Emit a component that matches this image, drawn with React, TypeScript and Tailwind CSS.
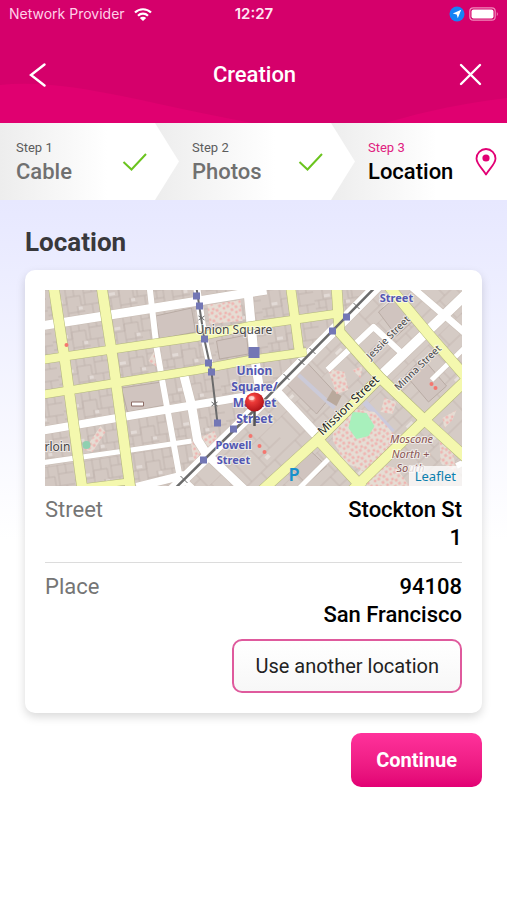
import React from "react";

type Point = [number, number];

interface StepProps {
  label: string;
  title: string;
  state: "done" | "current";
  className?: string;
}

const stations: Point[] = [
  [152, 6],
  [155, 16],
  [160, 49],
  [164, 73],
  [167, 82],
  [173, 133],
  [189, 139],
  [159, 170],
  [302, 27],
  [288, 41],
];

// quiet streets, drawn white
const streets = [
  { d: "M-4 36 L148 12 L215 1 L222 0", w: 9 },
  { d: "M-4 141 L90 125 L180 110 L214 104", w: 8 },
  { d: "M-4 173 L80 161 L147 151", w: 5 },
  { d: "M92 197 L140 185", w: 8 },
  { d: "M105 -4 L112 57 L118 92 L135 186 L150 200", w: 6 },
  { d: "M139 84 L147 115 L153 150 L162 164 L200 200", w: 9 },
  { d: "M152 -4 L160 50 L167 82", w: 7 },
  { d: "M203 -4 L209 60 L217 112", w: 9 },
  { d: "M128 200 L210 120 L333 -4", w: 11 },
  { d: "M231 101 L273 146", w: 10 },
  { d: "M283 80 L329 37 L356 62", w: 6 },
  { d: "M337 85 L402 23 L424 2", w: 10 },
  { d: "M366 -4 L424 46", w: 7 },
  { d: "M387 90 L424 54", w: 5 },
  { d: "M253 200 L285 168", w: 5 },
  { d: "M412 176 L424 170", w: 6 },
];

// main roads, drawn yellow with a darker casing
const mainRoads = [
  { d: "M9 -4 L21 75 L38 200", w: 10 },
  { d: "M57 -4 L69 74 L86 200", w: 10 },
  { d: "M-4 70 L152 47 L205 36 L290 24", w: 8 },
  { d: "M-4 105 L152 80 L205 70 L262 62", w: 8 },
  { d: "M246 -4 L255 64", w: 9 },
  { d: "M292 -4 L295 42 L335 87 L380 130 L424 170", w: 10 },
  { d: "M218 200 L273 150 L335 88", w: 10 },
  { d: "M271 147 L318 198", w: 10 },
  { d: "M344 -4 L384 44 L424 90", w: 10 },
  { d: "M308 200 L380 130 L424 88", w: 10 },
  { d: "M40 197 L88 191", w: 6 },
];

const treeClumps = [
  "M163 15 L196 10 L198 31 L165 34Z",
  "M290 128 L305 118 L330 122 L350 145 L343 165 L320 182 L300 172 L288 150Z",
  "M283 78 L300 82 L304 100 L292 104Z",
  "M308 80 L318 76 L316 88Z",
  "M340 108 L352 112 L348 124 L336 122Z",
  "M325 172 L352 178 L365 196 L322 196Z",
  "M395 150 L408 160 L412 182 L396 172Z",
  "M398 128 L412 120 L408 130 L400 138Z",
  "M146 152 L170 141 L173 149 L150 174Z",
  "M40 160 L56 136 L61 142 L48 162Z",
  "M104 71 L112 57 L114 78Z",
];

const redDots: Point[] = [
  [206, 146],
  [215, 156],
  [220, 162],
  [22, 55],
  [387, 94],
  [391, 98],
];

const MapPicture: React.FC = () => (
  <svg
    viewBox="0 0 418 196"
    preserveAspectRatio="xMidYMid slice"
    className="block h-[196px] w-full"
    role="img"
    aria-label="Map around Union Square"
  >
    <defs>
      <pattern
        id="blocks"
        width="53"
        height="35"
        patternUnits="userSpaceOnUse"
        patternTransform="rotate(-9)"
      >
        <rect width="53" height="35" fill="#d3c8c2" />
        <path
          d="M0 0H53M0 18H20V11H34V21H53M9 0V18M20 0V35M28 0V11M38 0V21M45 21V35M0 26H11V35M11 18V26M20 27H37M30 21V35M38 9H53M46 0V9M4 18V26"
          fill="none"
          stroke="#bbaea7"
          strokeWidth="0.7"
        />
        <path d="M10 13h6v3h-6zM31 22h4v3h-4z" fill="#e2dad6" />
      </pattern>
      <pattern
        id="lots"
        width="67"
        height="51"
        patternUnits="userSpaceOnUse"
        patternTransform="rotate(-44)"
      >
        <rect width="67" height="51" fill="#d5cbc5" />
        <path
          d="M0 0H67M0 27H67M16 0V27M37 0V27M52 0V15M37 15H67M9 27V51M29 27V40H48M48 27V51M9 40H29"
          fill="none"
          stroke="#bfb2ab"
          strokeWidth="0.7"
        />
        <path d="M31 43h8v3h-8zM42 18h5v4h-5z" fill="#e6dfda" />
      </pattern>
      <pattern
        id="trees"
        width="13"
        height="11"
        patternUnits="userSpaceOnUse"
        patternTransform="rotate(17)"
      >
        <rect width="13" height="11" fill="#e6ddd4" />
        <g fill="#f6dcd6" stroke="#ee9a9a" strokeWidth="0.8">
          <circle cx="2" cy="2" r="1.1" />
          <circle cx="6" cy="4" r="1.1" />
          <circle cx="11" cy="2" r="1" />
          <circle cx="3" cy="8" r="1.1" />
          <circle cx="8" cy="9" r="1" />
          <circle cx="11" cy="6" r="1.1" />
        </g>
      </pattern>
      <radialGradient id="ball" cx="0.38" cy="0.32" r="0.7">
        <stop offset="0" stopColor="#ffb3a6" />
        <stop offset="0.3" stopColor="#ec3a38" />
        <stop offset="1" stopColor="#b01218" />
      </radialGradient>
    </defs>

    <rect width="418" height="196" fill="url(#blocks)" />
    <path d="M328 0 L418 0 V196 H133 L210 120Z" fill="url(#lots)" />

    <g fill="#d0c4bf" stroke="#b3a59d" strokeWidth="0.8">
      <path d="M111 26 L147 18 L151 42 L115 49Z" />
      <path d="M77 98 L117 92 L121 115 L83 122Z" />
      <path d="M172 51 L202 45 L204 64 L175 69Z" />
      <path d="M334 22 L350 8 L374 26 L352 46Z" />
      <path d="M361 85 L378 68 L402 96 L384 112Z" />
      <path d="M265 160 L246 178 L262 194 L282 176Z" />
      <path d="M240 92 L262 72 L290 102 L272 124Z" />
    </g>
    <path d="M87 112h12v4h-12z" fill="#fff" stroke="#8d6d66" />
    <path d="M254 85 L290 118" stroke="#cbcad8" strokeWidth="4" />
    <path d="M320 112 L348 142" stroke="#cbcadc" strokeWidth="6" />
    <path d="M288 100 L297 106 L292 116 L282 110Z" fill="#b9a99c" />
    {treeClumps.map((d) => (
      <path key={d} d={d} fill="url(#trees)" />
    ))}
    <path
      d="M308 122 L322 123 L330 136 L324 146 L312 149 L304 138Z"
      fill="#a8f0bc"
    />
    <circle cx="42" cy="155" r="4" fill="#90d0b0" />

    <g fill="none" strokeLinejoin="round">
      {streets.map(({ d, w }) => (
        <path key={d} d={d} stroke="#c9bdb4" strokeWidth={w + 1} />
      ))}
      {streets.map(({ d, w }) => (
        <path key={d} d={d} stroke="#ffffff" strokeWidth={w} />
      ))}
      {mainRoads.map(({ d, w }) => (
        <path key={d} d={d} stroke="#b3b77c" strokeWidth={w + 1} />
      ))}
      {mainRoads.map(({ d, w }) => (
        <path key={d} d={d} stroke="#f4f8ae" strokeWidth={w} />
      ))}
    </g>
    {redDots.map(([x, y]) => (
      <circle key={`${x}-${y}`} cx={x} cy={y} r="2" fill="#f4766f" />
    ))}

    {/* rail lines */}
    <g fill="none" stroke="#6b6b6b" strokeWidth="2">
      <path d="M152 -2 L160 50 L167 82 L173 133" />
      <path d="M131 198 L210 120 L330 -2" strokeWidth="2.5" />
      <path
        d="M154 26l6 4m0-4l-6 4M167 112l6 4m0-4l-6 4M136 186l7 7M239 84l6 6M254 69l6 6M265 58l6 6M309 13l6 6"
        strokeWidth="1"
      />
    </g>
    {stations.map(([x, y]) => (
      <rect
        key={`${x}-${y}`}
        x={x - 3.5}
        y={y - 3.5}
        width="7"
        height="7"
        fill="#7377b5"
      />
    ))}
    <rect x="204" y="57" width="11" height="11" fill="#7377b5" />

    <g
      fontFamily="'Noto Sans', sans-serif"
      fontSize="12"
      stroke="#ffffff"
      strokeOpacity="0.6"
      strokeWidth="2"
      paintOrder="stroke"
    >
      <g fill="#464646">
        <text x="151" y="44">Union Square</text>
        <text x="0" y="161">rloin</text>
        <text transform="translate(278 146) rotate(-44)" fill="#222">
          Mission Street
        </text>
        <text transform="translate(326 70) rotate(-45)" fontSize="10">
          Jessie Street
        </text>
        <text transform="translate(354 101) rotate(-44)" fontSize="10">
          Minna Street
        </text>
      </g>
      <g fill="#5257b3" fontWeight="700" textAnchor="middle">
        <text x="210" y="85">Union</text>
        <text x="210" y="101">Square/</text>
        <text x="210" y="117">Market</text>
        <text x="210" y="133">Street</text>
        <g fontSize="11">
          <text x="189" y="159">Powell</text>
          <text x="189" y="174">Street</text>
          <text x="352" y="12">Street</text>
        </g>
      </g>
      <g fill="#8a5552" fontStyle="italic" fontSize="11" textAnchor="middle">
        <text x="367" y="153">Moscone</text>
        <text x="366" y="168">North +</text>
        <text x="366" y="182">South</text>
      </g>
      <text
        x="244"
        y="191"
        fill="#1690cc"
        fontSize="18"
        fontWeight="600"
        stroke="none"
      >
        P
      </text>
    </g>

    <path d="M210 120V136" stroke="#555" strokeWidth="2.5" />
    <circle cx="210" cy="112" r="9.5" fill="url(#ball)" />
    <ellipse cx="207" cy="108" rx="3" ry="2" fill="#fff" opacity="0.6" />
  </svg>
);

const CheckMark: React.FC = () => (
  <svg viewBox="0 0 26 20" className="h-5 w-[26px] shrink-0" fill="none">
    <path d="M1.5 10 L9.5 17.5 L24 2" stroke="#6bc41f" strokeWidth="2" />
  </svg>
);

const PinMark: React.FC = () => (
  <svg viewBox="0 0 22 28" className="h-7 w-[22px] shrink-0" fill="none">
    <path
      d="M11 26.5 C7.5 20.5 1.5 16 1.5 10.5 A9.5 9.5 0 0 1 20.5 10.5 C20.5 16 14.5 20.5 11 26.5Z"
      stroke="#e20074"
      strokeWidth="1.8"
      strokeLinejoin="round"
    />
    <circle cx="11" cy="10" r="3.6" fill="#e20074" />
  </svg>
);

const Step: React.FC<StepProps> = ({ label, title, state, className }) => {
  const current = state === "current";
  return (
    <li
      aria-current={current ? "step" : undefined}
      className={`relative flex items-center justify-between bg-linear-to-r from-[#ededed] to-white to-60% ${className}`}
    >
      <div>
        <p
          className={`text-[13px] leading-5 ${
            current ? "text-[#e0207f]" : "text-[#5c5c5c]"
          }`}
        >
          {label}
        </p>
        <p
          className={`text-[22px] leading-7 font-medium ${
            current ? "text-black" : "text-[#707070]"
          }`}
        >
          {title}
        </p>
      </div>
      {current ? <PinMark /> : <CheckMark />}
    </li>
  );
};

const StatusBar: React.FC = () => (
  <div className="relative grid h-7 grid-cols-3 items-center pr-2 pl-[9px] font-[Inter,sans-serif] text-sm">
    <div className="flex items-center gap-2 whitespace-nowrap text-[#ffd0e8]">
      Network Provider
      <svg viewBox="0 0 20 15" className="h-[15px] w-5 shrink-0" fill="none">
        <path
          d="M2 5.5 A11.5 11.5 0 0 1 18 5.5 M5 8.7 A7.2 7.2 0 0 1 15 8.7"
          stroke="#fff"
          strokeWidth="2.2"
        />
        <path d="M10 14 L6.8 11 A4.5 4.5 0 0 1 13.2 11Z" fill="#fff" />
      </svg>
    </div>
    <div className="text-center text-[15px] font-semibold text-[#ffe6f3]">
      12:27
    </div>
    <div className="flex items-center justify-end gap-1">
      <svg viewBox="0 0 16 16" className="h-4 w-4">
        <circle cx="8" cy="8" r="7.5" fill="#1683f5" />
        <path d="M12.2 3.8 L8.8 12.2 L7.7 8.4 L3.8 7.5Z" fill="#fff" />
      </svg>
      <svg viewBox="0 0 30 14" className="h-3.5 w-[30px]" fill="none">
        <rect
          x="0.8"
          y="0.8"
          width="25.4"
          height="12.4"
          rx="3.5"
          stroke="#f08abb"
          strokeWidth="1.2"
        />
        <rect x="2.5" y="2.5" width="22" height="9" rx="2" fill="#fff" />
        <path d="M27.8 5 a2.5 2.5 0 0 1 0 4Z" fill="#f08abb" />
      </svg>
    </div>
  </div>
);

const Header: React.FC = () => (
  <header className="relative bg-[#d5006b] text-white">
    <svg
      viewBox="0 0 507 123"
      preserveAspectRatio="none"
      className="absolute inset-0 h-full w-full"
      aria-hidden="true"
    >
      <path d="M0 85 C70 78 150 105 252 123 H0Z" fill="#e00070" />
      <path d="M385 123 C430 110 465 103 507 98 V123Z" fill="#e00070" />
    </svg>
    <StatusBar />
    <div className="relative flex h-[95px] items-center justify-between pr-[22px] pb-0.5 pl-6">
      <button type="button" aria-label="Back" className="p-0.5">
        <svg viewBox="0 0 24 24" className="h-6 w-6" fill="none">
          <path
            d="M18.5 1.5 L5 12 L18.5 22.5"
            stroke="#fff"
            strokeWidth="2.4"
            strokeLinecap="round"
          />
        </svg>
      </button>
      <h1 className="text-[22px] leading-7 font-medium">Creation</h1>
      <button type="button" aria-label="Close" className="p-0.5">
        <svg viewBox="0 0 24 24" className="h-6 w-6" fill="none">
          <path
            d="M2 2 L21 21 M21 2 L2 21"
            stroke="#fff"
            strokeWidth="2.4"
            strokeLinecap="round"
          />
        </svg>
      </button>
    </div>
  </header>
);

const App: React.FC = () => {
  return (
    <div className="min-h-screen bg-white font-[Roboto,sans-serif]">
      <Header />

      <ol className="grid h-[77px] grid-cols-[155fr_176fr_176fr] bg-white">
        <Step
          label="Step 1"
          title="Cable"
          state="done"
          className="z-20 -mr-6 pr-[31px] pl-4 [clip-path:polygon(0_0,calc(100%-24px)_0,100%_50%,calc(100%-24px)_100%,0_100%)]"
        />
        <Step
          label="Step 2"
          title="Photos"
          state="done"
          className="z-10 -mr-6 pr-[31px] pl-[37px] [clip-path:polygon(0_0,calc(100%-24px)_0,100%_50%,calc(100%-24px)_100%,0_100%)]"
        />
        <Step
          label="Step 3"
          title="Location"
          state="current"
          className="pr-2.5 pl-[37px]"
        />
      </ol>

      <main className="bg-linear-to-b from-[#e7e8ff] to-white to-[340px] px-[25px] pt-6 pb-8">
        <h2 className="text-[26px] leading-9 font-bold text-[#38383c]">
          Location
        </h2>

        <section className="mt-2.5 rounded-[10px] bg-white p-5 shadow-[0_4px_10px_rgba(0,0,0,0.15)]">
          <div className="relative overflow-hidden">
            <MapPicture />
            <a
              href="#leaflet"
              className="absolute right-0 bottom-0 bg-white/75 px-1.5 font-['Noto_Sans',sans-serif] text-[13px] leading-5 text-[#0b7fae]"
            >
              Leaflet
            </a>
          </div>

          <dl className="text-[22px] leading-7">
            <div className="flex justify-between border-b border-[#dcdcdc] pt-2.5 pb-2.5">
              <dt className="text-[#757575]">Street</dt>
              <dd className="text-right font-medium text-black">
                Stockton St
                <br />1
              </dd>
            </div>
            <div className="flex justify-between pt-2.5">
              <dt className="text-[#757575]">Place</dt>
              <dd className="text-right font-medium text-black">
                94108
                <br />
                San Francisco
              </dd>
            </div>
          </dl>

          <div className="mt-2.5 flex justify-end">
            <button
              type="button"
              className="h-[54px] rounded-[10px] border-2 border-[#df5a9d] bg-linear-to-b from-white to-[#f7f7f7] px-[21px] text-xl text-[#222]"
            >
              Use another location
            </button>
          </div>
        </section>

        <div className="mt-5 flex justify-end">
          <button
            type="button"
            className="h-[54px] rounded-[10px] bg-linear-to-b from-[#ff319b] to-[#e20074] px-[25px] text-xl font-bold text-white"
          >
            Continue
          </button>
        </div>
      </main>
    </div>
  );
};

export default App;
